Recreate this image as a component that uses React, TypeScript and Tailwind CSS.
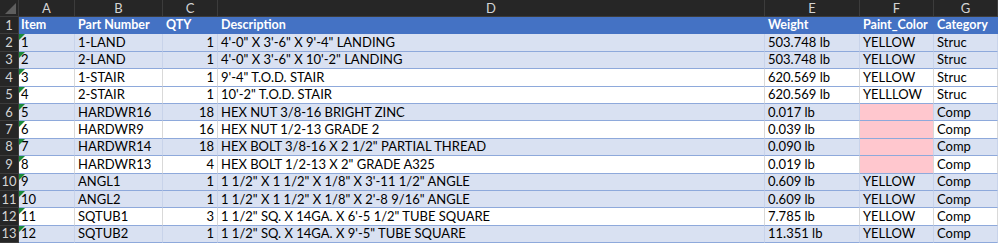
type Row = {
  item: string;
  part: string;
  qty: string;
  desc: string;
  weight: string;
  paint: string;
  cat: string;
  band: boolean;
  pink?: boolean;
};

const rows: Row[] = [
  { item: "1", part: "1-LAND", qty: "1", desc: `4'-0" X 3'-6" X 9'-4" LANDING`, weight: "503.748 lb", paint: "YELLOW", cat: "Struc", band: true },
  { item: "2", part: "2-LAND", qty: "1", desc: `4'-0" X 3'-6" X 10'-2" LANDING`, weight: "503.748 lb", paint: "YELLOW", cat: "Struc", band: true },
  { item: "3", part: "1-STAIR", qty: "1", desc: `9'-4" T.O.D. STAIR`, weight: "620.569 lb", paint: "YELLOW", cat: "Struc", band: false },
  { item: "4", part: "2-STAIR", qty: "1", desc: `10'-2" T.O.D. STAIR`, weight: "620.569 lb", paint: "YELLLOW", cat: "Struc", band: false },
  { item: "5", part: "HARDWR16", qty: "18", desc: "HEX NUT 3/8-16 BRIGHT ZINC", weight: "0.017 lb", paint: "", cat: "Comp", band: true, pink: true },
  { item: "6", part: "HARDWR9", qty: "16", desc: "HEX NUT 1/2-13 GRADE 2", weight: "0.039 lb", paint: "", cat: "Comp", band: false, pink: true },
  { item: "7", part: "HARDWR14", qty: "18", desc: `HEX BOLT 3/8-16 X 2 1/2" PARTIAL THREAD`, weight: "0.090 lb", paint: "", cat: "Comp", band: true, pink: true },
  { item: "8", part: "HARDWR13", qty: "4", desc: `HEX BOLT 1/2-13 X 2" GRADE A325`, weight: "0.019 lb", paint: "", cat: "Comp", band: false, pink: true },
  { item: "9", part: "ANGL1", qty: "1", desc: `1 1/2" X 1 1/2" X 1/8" X 3'-11 1/2" ANGLE`, weight: "0.609 lb", paint: "YELLOW", cat: "Comp", band: true },
  { item: "10", part: "ANGL2", qty: "1", desc: `1 1/2" X 1 1/2" X 1/8" X 2'-8 9/16" ANGLE`, weight: "0.609 lb", paint: "YELLOW", cat: "Comp", band: true },
  { item: "11", part: "SQTUB1", qty: "3", desc: `1 1/2" SQ. X 14GA. X 6'-5 1/2" TUBE SQUARE`, weight: "7.785 lb", paint: "YELLOW", cat: "Comp", band: false },
  { item: "12", part: "SQTUB2", qty: "1", desc: `1 1/2" SQ. X 14GA. X 9'-5" TUBE SQUARE`, weight: "11.351 lb", paint: "YELLOW", cat: "Comp", band: true },
];

const letters = [
  { l: "A", w: "w-[56px]" },
  { l: "B", w: "w-[88px]" },
  { l: "C", w: "w-[55px]" },
  { l: "D", w: "w-[547px]" },
  { l: "E", w: "w-[95px]" },
  { l: "F", w: "w-[74px]" },
  { l: "G", w: "w-[64px]" },
];

function RowHead({ n }: { n: number }) {
  return (
    <div className="w-[19px] shrink-0 flex items-center justify-center bg-[#262626] text-[#d4d4d4] border-r border-b border-[#3c3c3c] text-[13px]">
      {n}
    </div>
  );
}

export default function App() {
  return (
    <div className="w-[998px] h-[243px] overflow-hidden bg-white font-['Lato',sans-serif] text-[13px] leading-none text-black">
      {/* column letters */}
      <div className="flex h-[17px] bg-[#262626] text-[#d4d4d4]">
        <div className="w-[19px] shrink-0 relative border-r border-b border-[#3c3c3c]">
          <div className="absolute right-[2px] bottom-[2px] w-0 h-0 border-l-[11px] border-l-transparent border-b-[11px] border-b-[#5e5e5e]" />
        </div>
        {letters.map((c) => (
          <div
            key={c.l}
            className={`${c.w} shrink-0 flex items-center justify-center border-r border-b border-[#3c3c3c]`}
          >
            {c.l}
          </div>
        ))}
      </div>

      {/* table header */}
      <div className="flex h-[17.4px]">
        <RowHead n={1} />
        <div className="flex flex-1 bg-[#4472c4] text-white font-bold text-[12.5px]">
          <div className="w-[56px] shrink-0 flex items-center pl-[2px]">Item</div>
          <div className="w-[88px] shrink-0 flex items-center pl-[3px]">Part Number</div>
          <div className="w-[55px] shrink-0 flex items-center pl-[3px]">QTY</div>
          <div className="w-[547px] shrink-0 flex items-center pl-[3px]">Description</div>
          <div className="w-[95px] shrink-0 flex items-center pl-[3px]">Weight</div>
          <div className="w-[74px] shrink-0 flex items-center pl-[3px]">Paint_Color</div>
          <div className="w-[64px] shrink-0 flex items-center pl-[3px]">Category</div>
        </div>
      </div>

      {rows.map((r, i) => {
        const bg = r.band ? "bg-[#d9e1f2]" : "bg-white";
        const vline = r.band ? "border-r-[#c8d3ea]" : "border-r-[#d9d9d9]";
        const cell = `shrink-0 flex items-center border-r ${vline} border-b border-b-[#8ea9db]`;
        return (
          <div key={r.item} className={`flex h-[17.4px] ${bg}`}>
            <RowHead n={i + 2} />
            <div className={`w-[56px] ${cell} relative pl-[2px]`}>
              <div className="absolute left-0 top-0 w-0 h-0 border-t-[6px] border-t-[#1a8a3a] border-r-[6px] border-r-transparent" />
              {r.item}
            </div>
            <div className={`w-[88px] ${cell} pl-[3px]`}>{r.part}</div>
            <div className={`w-[55px] ${cell} justify-end pr-[3px]`}>{r.qty}</div>
            <div className={`w-[547px] ${cell} pl-[3px]`}>{r.desc}</div>
            <div className={`w-[95px] ${cell} pl-[3px]`}>{r.weight}</div>
            <div className={`w-[74px] ${cell} pl-[3px] ${r.pink ? "bg-[#ffc7ce]" : ""}`}>{r.paint}</div>
            <div className={`w-[64px] ${cell} pl-[3px]`}>{r.cat}</div>
          </div>
        );
      })}
    </div>
  );
}
